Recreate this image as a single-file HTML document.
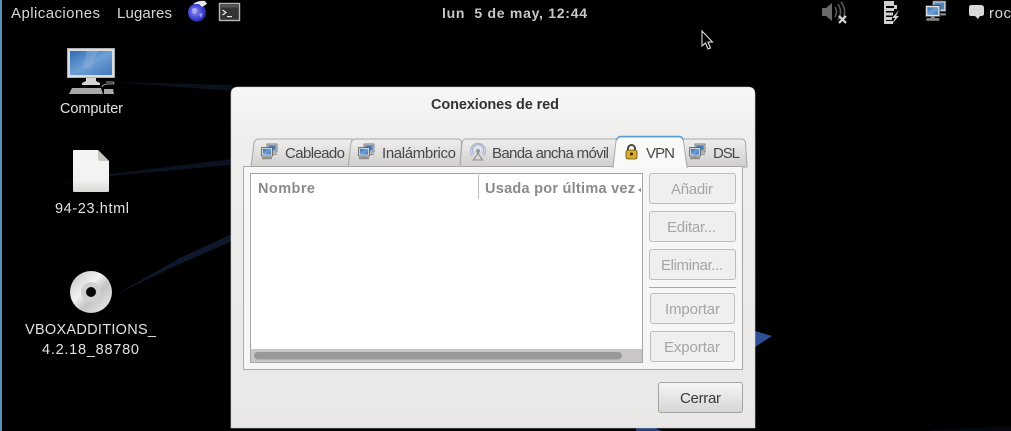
<!DOCTYPE html>
<html><head><meta charset="utf-8"><title>Conexiones de red</title>
<style>
html,body{margin:0;padding:0;background:#000;width:1011px;height:431px;overflow:hidden}
svg{display:block;filter:blur(.3px)}
text{font-family:"Liberation Sans","DejaVu Sans",sans-serif;font-size:15px}
.p{fill:#d8d8d8}
.d{fill:#e2e2e2;font-size:14.5px}
.t{fill:#484848}
.b{fill:#a5a5a3}
.h{fill:#8a8a88;font-weight:bold;font-size:14.5px}
</style></head><body>
<svg width="1011" height="431" viewBox="0 0 1011 431" xmlns="http://www.w3.org/2000/svg">
<defs>
<linearGradient id="win" x1="0" y1="0" x2="0" y2="1"><stop offset="0" stop-color="#f7f7f6"/><stop offset=".15" stop-color="#eeeeed"/><stop offset="1" stop-color="#e9e8e7"/></linearGradient>
<linearGradient id="tab" x1="0" y1="0" x2="0" y2="1"><stop offset="0" stop-color="#f0efee"/><stop offset="1" stop-color="#cfcecc"/></linearGradient>
<linearGradient id="btn" x1="0" y1="0" x2="0" y2="1"><stop offset="0" stop-color="#f6f6f5"/><stop offset="1" stop-color="#d6d5d3"/></linearGradient>
<linearGradient id="scr" x1="0" y1="0" x2="1" y2="1"><stop offset="0" stop-color="#2f6db5"/><stop offset=".5" stop-color="#6f9fd4"/><stop offset="1" stop-color="#3f78bb"/></linearGradient>
<linearGradient id="doc" x1="0" y1="0" x2="0" y2="1"><stop offset="0" stop-color="#f5f5f3"/><stop offset=".7" stop-color="#f2f2f0"/><stop offset="1" stop-color="#d8d8d5"/></linearGradient>
<radialGradient id="globe" cx=".4" cy=".45" r=".7"><stop offset="0" stop-color="#8f90f0"/><stop offset=".6" stop-color="#3a3fd0"/><stop offset="1" stop-color="#1d1f80"/></radialGradient>
<linearGradient id="disc" x1="0" y1="0" x2="1" y2="1"><stop offset="0" stop-color="#bdbdbd"/><stop offset=".4" stop-color="#f2f2f2"/><stop offset=".6" stop-color="#c4c4c4"/><stop offset="1" stop-color="#f0f0f0"/></linearGradient>
<g id="net">
<rect x="6" y="0" width="10" height="8" fill="#dcdfe2" stroke="#555" stroke-width=".7"/>
<rect x="7.2" y="1.2" width="7.6" height="5.4" fill="#4f82b8"/>
<rect x="0.5" y="3.5" width="11" height="8.5" fill="#e4e6e8" stroke="#444" stroke-width=".7"/>
<rect x="1.8" y="4.8" width="8.4" height="5.8" fill="url(#scr)"/>
<rect x="4.5" y="12" width="3" height="1.2" fill="#999"/>
<rect x="1" y="13.2" width="10" height="2" fill="#888"/>
<rect x="12" y="9.5" width="4" height="1.6" fill="#999"/>
</g>
</defs>

<rect width="1011" height="431" fill="#000"/>
<rect x="0" y="0" width="2" height="431" fill="#5b8fb8"/>

<!-- wallpaper streaks -->
<path d="M115 82 L232 85 L232 91 Z" fill="#0a111c"/>
<path d="M50 186 L110 174 L232 159 L232 165 L110 176 Z" fill="#0a1120"/>
<path d="M115 295 L180 258 L232 234 L232 241 L175 266 Z" fill="#0e182d"/>
<path d="M755 331 L772 336 L755 347 Z" fill="#2c4f96"/>
<path d="M636 428 L655 428 L662 431 L636 431 Z" fill="#233f7c"/>
<path d="M930 430 L1011 426 L1011 431 L930 431 Z" fill="#05080f"/>

<!-- top panel -->
<text class="p" x="11" y="18" textLength="89">Aplicaciones</text>
<text class="p" x="117" y="18" textLength="55">Lugares</text>
<circle cx="197" cy="12.500" r="9" fill="url(#globe)"/>
<path d="M192 9 q3 -2 5 0 l-1 4 l-3 1 Z M199 14 l4 -1 l-2 5 Z" fill="#c6c8f4" opacity=".65"/>
<path d="M193 4 Q199 0 205 1 L207 4 L202 7 L199 4 Z" fill="#e8e8ee"/>
<rect x="219.500" y="3.500" width="20" height="17" fill="#333" stroke="#b8b8b8" stroke-width="1.400"/>
<rect x="221" y="5" width="17" height="2.500" fill="#555"/>
<path d="M222.500 10 L226 12.500 L222.500 15" fill="none" stroke="#e8e8e8" stroke-width="1.200"/>
<rect x="227" y="16" width="5" height="1.200" fill="#e8e8e8"/>
<text class="p" x="442" y="18" textLength="145" style="font-weight:bold;fill:#c8c8c8;font-size:14px" xml:space="preserve">lun  5 de may, 12:44</text>

<!-- volume -->
<path d="M822 8 H826 L832 3 V21 L826 16 H822 Z" fill="#6a6a6a"/>
<path d="M835 7 Q838 12 835 17 M838 4 Q843 12 838 20 M841 2 Q847 10 843 19" fill="none" stroke="#5a5a5a" stroke-width="1.600"/>
<path d="M839 16 L846 23 M846 16 L839 23" stroke="#d8d8d8" stroke-width="2.200"/>
<!-- battery -->
<path d="M884 5 V1 H894 V5 H897 V9 H894 V6 H886 V24 H884 Z" fill="#cfcfcf"/>
<rect x="884" y="8" width="10" height="3" fill="#cfcfcf"/>
<rect x="884" y="12.500" width="9" height="3" fill="#cfcfcf"/>
<rect x="884" y="17" width="8" height="3" fill="#cfcfcf"/>
<rect x="884" y="21" width="9" height="3" fill="#cfcfcf"/>
<path d="M899 10 L892 18 H895 L892 24 L899 16 H896 Z" fill="#cfcfcf"/>
<!-- network -->
<use href="#net" transform="translate(925,1) scale(1.300)"/>
<!-- chat -->
<path d="M971 5 H981 Q984 5 984 8 V14 Q984 16 981 16 H980 L978 19 L975 16 H971 Q969 16 969 14 V8 Q969 5 971 5 Z" fill="#d8d8d8"/>
<text class="p" x="989" y="18" textLength="22">roc</text>

<!-- cursor -->
<path d="M702 31 V46 L705.500 43 L708 49 L710.500 48 L708 42 L712.500 42 Z" fill="#000" stroke="#eee" stroke-width="1"/>

<!-- computer icon -->
<rect x="67.500" y="48.500" width="47" height="29" fill="#d9dde0" stroke="#aeb2b5"/>
<rect x="70" y="51" width="42" height="24" fill="url(#scr)"/>
<path d="M87 51 H98 L91 68 H83 Z" fill="#9cbbe0" opacity=".35"/>
<path d="M86 78 H96 V81 L100 83 V85 H82 V83 L86 81 Z" fill="#d5d5d3"/>
<path d="M72 88 H101 L103 94 H69 Z" fill="#a9a9a7"/>
<path d="M104 89 H113 L114 94 H104 Z" fill="#a9a9a7"/>
<path d="M102 87 Q103 84 108 84 H113 Q115 83 113 82 H106" fill="none" stroke="#a0a0a0" stroke-width="1"/>
<text class="d" x="60" y="113" textLength="63">Computer</text>

<!-- file icon -->
<path d="M74 150 H98 L109 161 V191 Q109 192 107 192 H75 Q73 192 73 191 V151 Q73 150 74 150 Z" fill="url(#doc)"/>
<path d="M98 150 L109 161 H101 Q98 161 98 158 Z" fill="#c6c6c2"/>
<text class="d" x="55" y="213" textLength="74">94-23.html</text>

<!-- disc -->
<circle cx="91" cy="292" r="21" fill="url(#disc)"/>
<circle cx="91" cy="292" r="10" fill="#d0d0d0"/>
<circle cx="91" cy="292" r="5" fill="#0a0a0a"/>
<text class="d" x="25" y="334" textLength="131">VBOXADDITIONS_</text>
<text class="d" x="42" y="354" textLength="97">4.2.18_88780</text>

<!-- window -->
<path d="M231 94 Q231 87 238 87 H748 Q755 87 755 94 V428 H231 Z" fill="url(#win)" stroke="#cfcfcd" stroke-width=".6"/>
<text x="431" y="109" textLength="128" style="font-weight:bold;fill:#333;font-size:14.500px">Conexiones de red</text>

<!-- inactive tabs -->
<path d="M251 167 L254 143 Q255 139 259 139 H352 L348 167 Z" fill="url(#tab)" stroke="#a8a8a6"/>
<path d="M348 167 L351 143 Q352 139 356 139 H458 Q461 139 461.500 143 L460 167 Z" fill="url(#tab)" stroke="#a8a8a6"/>
<path d="M460 167 L462 143 Q462.500 139 466 139 H617 L613 167 Z" fill="url(#tab)" stroke="#a8a8a6"/>
<path d="M685 167 L683 139 H741 Q745 139 745.500 143 L747 167 Z" fill="url(#tab)" stroke="#a8a8a6"/>

<!-- notebook frame -->
<rect x="243.500" y="166.500" width="499" height="203" fill="#f6f6f5" stroke="#a9a9a7"/>
<!-- active tab -->
<path d="M613 167.500 L616 141 Q617 137 621 137 H679 Q683 137 683.500 141 L687 167.500 Z" fill="#f9f9f8" stroke="#a8a8a6"/>
<path d="M616.500 140 Q617.500 136.500 621 136.500 H679 Q682.500 136.500 683 140" fill="none" stroke="#5f9ccf" stroke-width="1.400"/>
<rect x="613.500" y="166" width="73" height="2" fill="#f9f9f8"/>

<use href="#net" transform="translate(261,144)"/>
<use href="#net" transform="translate(358,144)"/>
<g transform="translate(470,144)" fill="none">
<circle cx="8" cy="7" r="2" fill="#8e96b5"/>
<path d="M4 10 A5.500 5.500 0 1 1 12 10 M2.500 12 A7.500 7.500 0 1 1 13.500 12" stroke="#a9b6d2" stroke-width="1.200"/>
<path d="M8 9 L3.500 16 H12.500 Z" stroke="#8a8a8a" stroke-width="1.100"/>
</g>
<g>
<path d="M628 151 V148.500 A3.500 3.500 0 0 1 635 148.500 V151" fill="none" stroke="#4a4a40" stroke-width="2"/>
<rect x="626" y="150" width="11" height="9" rx="2" fill="#d9ac2c" stroke="#5f4a10" stroke-width=".8"/>
<circle cx="631.500" cy="154" r="1.500" fill="#3a2e0a"/>
</g>
<use href="#net" transform="translate(689,144)"/>

<text class="t" x="285" y="158" textLength="60">Cableado</text>
<text class="t" x="382" y="158" textLength="74">Inalámbrico</text>
<text class="t" x="492" y="158" textLength="117">Banda ancha móvil</text>
<text class="t" x="646" y="158" textLength="29">VPN</text>
<text class="t" x="713" y="158" textLength="27">DSL</text>

<!-- tree -->
<rect x="250.500" y="173.500" width="392" height="189" fill="#fff" stroke="#a5a5a3"/>
<rect x="478" y="175" width="1" height="24" fill="#bdbdbb"/>
<text class="h" x="258" y="193" textLength="57">Nombre</text>
<text class="h" x="485" y="193" textLength="150">Usada por última vez</text>
<path d="M641 188 L638 190 L641 192 Z" fill="#8a8a88"/>
<rect x="251" y="349" width="391" height="13" fill="#c8c7c5"/>
<rect x="254" y="352" width="368" height="7.500" rx="3.700" fill="#999997"/>

<!-- buttons -->
<g fill="#efefed" stroke="#bdbdbb">
<rect x="649.500" y="173.500" width="86" height="30" rx="2.500"/>
<rect x="649.500" y="211.500" width="86" height="30" rx="2.500"/>
<rect x="649.500" y="249.500" width="86" height="30" rx="2.500"/>
<rect x="650.500" y="293.500" width="84" height="30" rx="2.500"/>
<rect x="650.500" y="331.500" width="84" height="30" rx="2.500"/>
</g>
<rect x="649" y="287" width="87" height="1" fill="#a9a9a7"/>
<text class="b" x="671" y="194" textLength="42">Añadir</text>
<text class="b" x="667" y="232" textLength="49">Editar...</text>
<text class="b" x="661" y="270" textLength="62">Eliminar...</text>
<text class="b" x="665" y="314" textLength="55">Importar</text>
<text class="b" x="664" y="352" textLength="56">Exportar</text>
<rect x="658.500" y="382.500" width="84" height="30" rx="2.500" fill="url(#btn)" stroke="#a3a3a1"/>
<text x="680" y="403" textLength="41" style="fill:#3a3a3a">Cerrar</text>
</svg>
</body></html>
